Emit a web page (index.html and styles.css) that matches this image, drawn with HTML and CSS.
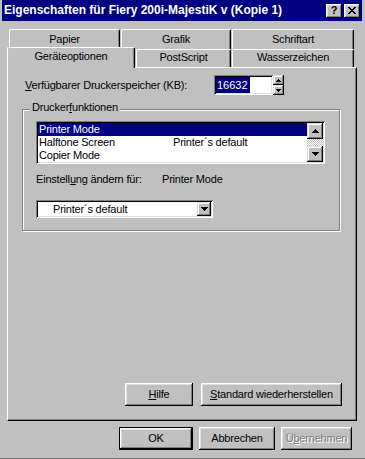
FILE: index.html
```html
<!DOCTYPE html>
<html lang="de">
<head>
  <meta charset="UTF-8" />
  <title>Eigenschaften für Fiery 200i-MajestiK v (Kopie 1)</title>
  <link rel="stylesheet" href="styles.css">
</head>
<body>

<div class="window">
  <div class="titlebar">
    <span class="title">Eigenschaften für Fiery 200i-MajestiK v (Kopie 1)</span>
    <div class="caption-buttons">
      <span class="cbtn help">?</span>
      <span class="cbtn">
        <svg width="8" height="7" viewBox="0 0 8 7"><path d="M0 0h2v1H0z M6 0h2v1H6z M1 1h2v1H1z M5 1h2v1H5z M2 2h4v1H2z M3 3h2v1H3z M2 4h4v1H2z M1 5h2v1H1z M5 5h2v1H5z M0 6h2v1H0z M6 6h2v1H6z"/></svg>
      </span>
    </div>
  </div>

  <div class="tabs">
    <div class="tab-row back">
      <div class="tab tab-papier">Papier</div>
      <div class="tab tab-grafik">Grafik</div>
      <div class="tab tab-wide">Schriftart</div>
    </div>
    <div class="tab-row front">
      <div class="tab active">Geräteoptionen</div>
      <div class="tab tab-postscript">PostScript</div>
      <div class="tab tab-wide">Wasserzeichen</div>
    </div>
  </div>

  <div class="panel">
    <div class="mem-row">
      <span class="mem-label"><u>V</u>erfügbarer Druckerspeicher (KB):</span>
      <div class="field"><span class="sel">16632</span></div>
      <div class="spin">
        <span class="spin-btn"><svg width="5" height="3" viewBox="0 0 5 3"><path d="M2 0h1v1H2z M1 1h3v1H1z M0 2h5v1H0z"/></svg></span>
        <span class="spin-btn"><svg width="5" height="3" viewBox="0 0 5 3"><path d="M0 0h5v1H0z M1 1h3v1H1z M2 2h1v1H2z"/></svg></span>
      </div>
    </div>

    <div class="group">
      <div class="group-label">Drucker<u>f</u>unktionen</div>
      <div class="listbox">
        <div class="list-rows">
          <div class="list-row selected"><span class="col1">Printer Mode</span><span></span></div>
          <div class="list-row"><span class="col1">Halftone Screen</span><span>Printer´s default</span></div>
          <div class="list-row"><span class="col1">Copier Mode</span><span></span></div>
        </div>
        <div class="scrollbar">
          <span class="scroll-btn"><svg width="7" height="4" viewBox="0 0 7 4"><path d="M3 0h1v1H3z M2 1h3v1H2z M1 2h5v1H1z M0 3h7v1H0z"/></svg></span>
          <span class="scroll-track"></span>
          <span class="scroll-btn"><svg width="7" height="4" viewBox="0 0 7 4"><path d="M0 0h7v1H0z M1 1h5v1H1z M2 2h3v1H2z M3 3h1v1H3z"/></svg></span>
        </div>
      </div>

      <div class="setting-row">
        <span class="setting-label">Einstell<u>u</u>ng ändern für:</span>
        <span>Printer Mode</span>
      </div>

      <div class="combo">
        <span class="combo-text">Printer´s default</span>
        <span class="combo-btn"><svg width="7" height="4" viewBox="0 0 7 4"><path d="M0 0h7v1H0z M1 1h5v1H1z M2 2h3v1H2z M3 3h1v1H3z"/></svg></span>
      </div>
    </div>

    <div class="panel-buttons">
      <button class="btn btn-help"><u>H</u>ilfe</button>
      <button class="btn btn-standard"><u>S</u>tandard wiederherstellen</button>
    </div>
  </div>

  <div class="dialog-buttons">
    <button class="btn btn-ok">OK</button>
    <button class="btn btn-cancel">Abbrechen</button>
    <button class="btn btn-apply" disabled>Ü<u>b</u>ernehmen</button>
  </div>
</div>

</body>
</html>
```

FILE: styles.css
```css
* {
  box-sizing: border-box;
}
body {
  margin: 0;
  background: #c0c0c0;
  color: #000;
  font-family: "Liberation Sans", Arial, sans-serif;
  font-size: 11px;
  letter-spacing: -0.2px;
  line-height: 13px;
}
u {
  text-decoration-thickness: 1px;
  text-underline-offset: 1px;
}
.window {
  width: 365px;
  height: 459px;
  padding: 0 3px 0 2px;
  display: flex;
  flex-direction: column;
  border-bottom: 1px solid #808080;
}

/* title bar */
.titlebar {
  height: 21px;
  flex: none;
  background: #000080;
  color: #fff;
  display: flex;
  align-items: center;
  justify-content: space-between;
  padding: 0 2px;
}
.title {
  font-weight: 700;
  font-size: 12px;
  letter-spacing: 0;
}
.caption-buttons {
  display: flex;
  gap: 2px;
}
.cbtn {
  width: 16px;
  height: 14px;
  background: #c0c0c0;
  color: #000;
  display: flex;
  align-items: center;
  justify-content: center;
  box-shadow: inset -1px -1px #000, inset 1px 1px #fff, inset -2px -2px #808080, inset 2px 2px #dfdfdf;
}
.cbtn.help {
  font-weight: 700;
  font-size: 11px;
  letter-spacing: 0;
}

/* tabs */
.tabs {
  margin-top: 8px;
}
.tab-row {
  display: flex;
  gap: 1px;
  height: 20px;
}
.tab-row.back {
  margin-left: 7px;
}
.tab-row.front {
  margin-top: -2px;
  margin-left: 5px;
}
.tab {
  background: #c0c0c0;
  border-top: 1px solid #fff;
  border-left: 1px solid #fff;
  border-right: 1px solid #000;
  border-radius: 2px 2px 0 0;
  box-shadow: inset -1px 0 #808080;
  text-align: center;
  padding-top: 3px;
}
.tab-row.front .tab {
  margin-top: 2px;
  height: 18px;
  padding-top: 1px;
}
.tab-papier { width: 111px; }
.tab-grafik { width: 110px; }
.tab-wide { width: 122px; }
.tab-postscript { width: 95px; }
.tab-row.front .tab.active {
  width: 128px;
  height: 21px;
  margin-top: 0;
  margin-bottom: -1px;
  padding-top: 2px;
  position: relative;
  z-index: 1;
}

/* property page */
.panel {
  margin-left: 5px;
  width: 350px;
  height: 354px;
  flex: none;
  border-top: 1px solid #fff;
  border-left: 1px solid #fff;
  border-right: 1px solid #000;
  border-bottom: 1px solid #000;
  box-shadow: inset -1px -1px #808080;
  display: flex;
  flex-direction: column;
  padding: 0 14px 14px 0;
}
.mem-row {
  display: flex;
  align-items: center;
  margin: 7px 0 0 17px;
  height: 20px;
}
.mem-label {
  width: 189px;
}
.field {
  width: 59px;
  height: 20px;
  background: #fff;
  box-shadow: inset 1px 1px #808080, inset -1px -1px #fff, inset 2px 2px #000, inset -2px -2px #dfdfdf;
  padding: 2px 0 0 2px;
}
.sel {
  display: inline-block;
  background: #000080;
  color: #fff;
  line-height: 16px;
  padding: 0 2px 0 1px;
  letter-spacing: 0;
}
.spin {
  display: flex;
  flex-direction: column;
  width: 11px;
  height: 20px;
}
.spin-btn, .scroll-btn, .combo-btn {
  background: #c0c0c0;
  display: flex;
  align-items: center;
  justify-content: center;
  box-shadow: inset -1px -1px #000, inset 1px 1px #dfdfdf, inset -2px -2px #808080, inset 2px 2px #fff;
}
.spin-btn {
  height: 10px;
}

/* group box */
.group {
  margin: 14px 0 0 14px;
  width: 318px;
  border: 1px solid #808080;
  box-shadow: inset 1px 1px #fff, 1px 1px #fff;
  padding: 0 0 12px 13px;
}
.group-label {
  margin: -9px 0 0 -6px;
  padding: 0 2px;
  width: max-content;
  background: #c0c0c0;
}
.listbox {
  margin-top: 7px;
  width: 289px;
  height: 43px;
  background: #fff;
  box-shadow: inset 1px 1px #808080, inset -1px -1px #fff, inset 2px 2px #000, inset -2px -2px #dfdfdf;
  padding: 2px;
  display: flex;
}
.list-rows {
  flex: 1;
}
.list-row {
  display: grid;
  grid-template-columns: 134px 1fr;
  height: 13px;
  padding-left: 1px;
}
.list-row.selected {
  background: #000080;
  color: #fff;
}
.scrollbar {
  width: 16px;
  display: flex;
  flex-direction: column;
}
.scroll-btn {
  height: 16px;
}
.scroll-track {
  flex: 1;
  background: repeating-conic-gradient(#fff 0 25%, #c0c0c0 0 50%) 0 0 / 2px 2px;
}
.setting-row {
  display: flex;
  margin-top: 9px;
}
.setting-label {
  width: 126px;
}
.combo {
  margin-top: 14px;
  width: 177px;
  height: 18px;
  background: #fff;
  box-shadow: inset 1px 1px #808080, inset -1px -1px #fff, inset 2px 2px #000, inset -2px -2px #dfdfdf;
  padding: 2px;
  display: flex;
  align-items: center;
}
.combo-text {
  flex: 1;
  padding-left: 15px;
}
.combo-btn {
  width: 14px;
  height: 14px;
}

/* buttons */
.btn {
  font: inherit;
  letter-spacing: inherit;
  color: #000;
  background: #c0c0c0;
  border: none;
  padding: 0;
  height: 23px;
  box-shadow: inset -1px -1px #000, inset 1px 1px #fff, inset -2px -2px #808080, inset 2px 2px #dfdfdf;
}
.panel-buttons {
  margin-top: auto;
  display: flex;
  justify-content: flex-end;
  gap: 8px;
}
.btn-help { width: 68px; }
.btn-standard { width: 141px; }
.dialog-buttons {
  margin-top: 6px;
  display: flex;
  justify-content: flex-end;
  gap: 6px;
  padding-right: 10px;
}
.btn-ok {
  width: 74px;
  border: 1px solid #000;
}
.btn-cancel { width: 76px; }
.btn-apply {
  width: 71px;
  color: #808080;
  text-shadow: 1px 1px #fff;
}
```
